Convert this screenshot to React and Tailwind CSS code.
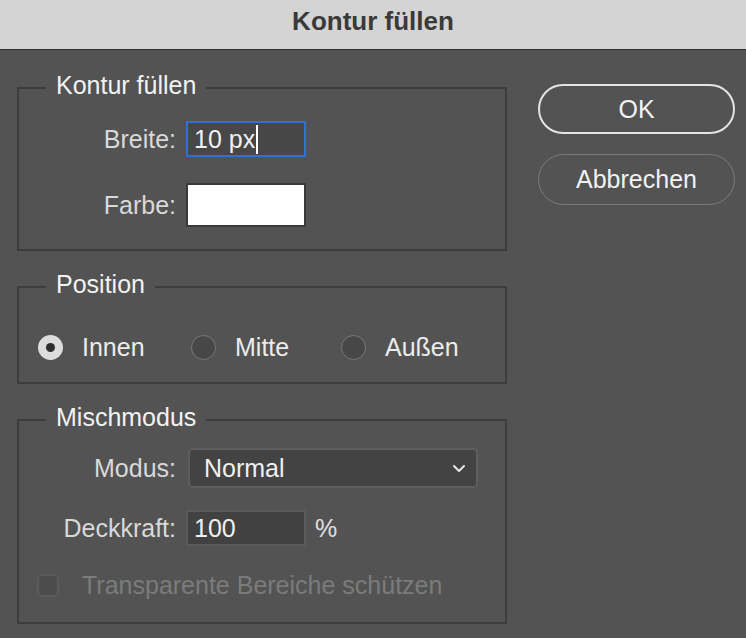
export default function App() {
  return (
    <div className="w-[746px] h-[638px] bg-[#535353] flex flex-col overflow-hidden font-['Liberation_Sans',Arial,sans-serif]">
      <div className="h-[50px] shrink-0 bg-[#d3d4d3] border-b border-[#2e2e2e] flex justify-center pt-[6px]">
        <span className="text-[26px] leading-[30px] font-bold text-[#3a3a3a]">Kontur füllen</span>
      </div>
      <div className="flex pl-[17px] pt-[21px]">
        <div className="w-[490px] shrink-0 flex flex-col">
          <fieldset className="border-2 border-[#3d3d3d] pt-[17px] pb-[22px]">
            <legend className="ml-[27px] px-[10px] pb-[4px] text-[25px] leading-[29px] text-[#f2f2f2]">Kontur füllen</legend>
            <div className="grid grid-cols-[157px_auto] gap-x-[10px] gap-y-[26px] items-center">
              <span className="text-right text-[25px] leading-[29px] text-[#d9d9d9]">Breite:</span>
              <div className="w-[120px] h-[36px] border-2 border-[#2f6fd6] bg-[#474747] flex items-center pl-[6px]">
                <span className="text-[25px] leading-[29px] text-[#f0f0f0]">10 px</span>
                <span className="w-[2px] h-[29px] bg-white ml-[1px]"></span>
              </div>
              <span className="text-right text-[25px] leading-[29px] text-[#d9d9d9]">Farbe:</span>
              <div className="w-[120px] h-[44px] border-2 border-[#3a3a3a] bg-white"></div>
            </div>
          </fieldset>

          <fieldset className="mt-[19px] border-2 border-[#3d3d3d] pt-[30px] pb-[20px]">
            <legend className="ml-[27px] px-[10px] pb-[4px] text-[25px] leading-[29px] text-[#f2f2f2]">Position</legend>
            <div className="flex items-center h-[29px] pl-[19px]">
              <div className="w-[153px] flex items-center gap-[19px]">
                <span className="w-[25px] h-[25px] rounded-full bg-[#dcdcdc] flex items-center justify-center">
                  <span className="w-[9px] h-[9px] rounded-full bg-[#2e2e2e]"></span>
                </span>
                <span className="text-[25px] leading-[29px] text-[#ececec]">Innen</span>
              </div>
              <div className="w-[150px] flex items-center gap-[19px]">
                <span className="w-[25px] h-[25px] rounded-full bg-[#474747] border-[1.5px] border-[#787878]"></span>
                <span className="text-[25px] leading-[29px] text-[#ececec]">Mitte</span>
              </div>
              <div className="flex items-center gap-[19px]">
                <span className="w-[25px] h-[25px] rounded-full bg-[#474747] border-[1.5px] border-[#787878]"></span>
                <span className="text-[25px] leading-[29px] text-[#ececec]">Außen</span>
              </div>
            </div>
          </fieldset>

          <fieldset className="mt-[19px] border-2 border-[#3d3d3d] pt-[12px] pb-[22px]">
            <legend className="ml-[27px] px-[10px] pb-[4px] text-[25px] leading-[29px] text-[#f2f2f2]">Mischmodus</legend>
            <div className="flex items-center">
              <span className="w-[157px] text-right text-[25px] leading-[29px] text-[#d9d9d9]">Modus:</span>
              <div className="ml-[12px] w-[290px] h-[40px] rounded-[5px] border-2 border-[#5e5e5e] bg-[#434343] flex items-center justify-between pl-[14px] pr-[10px]">
                <span className="text-[25px] leading-[29px] text-[#f0f0f0]">Normal</span>
                <svg width="14" height="10" viewBox="0 0 14 10" fill="none">
                  <polyline points="2,3 7,8 12,3" stroke="#e6e6e6" strokeWidth="2" strokeLinecap="round" strokeLinejoin="round" />
                </svg>
              </div>
            </div>
            <div className="flex items-center mt-[22px]">
              <span className="w-[157px] text-right text-[25px] leading-[29px] text-[#d9d9d9]">Deckkraft:</span>
              <div className="ml-[10px] w-[120px] h-[36px] border-2 border-[#5b5b5b] bg-[#414141] flex items-center pl-[6px]">
                <span className="text-[25px] leading-[29px] text-[#f0f0f0]">100</span>
              </div>
              <span className="ml-[9px] text-[25px] leading-[29px] text-[#e0e0e0]">%</span>
            </div>
            <div className="flex items-center h-[29px] mt-[25px] pl-[18px] gap-[23px]">
              <span className="w-[22px] h-[23px] rounded-[5px] border-2 border-[#5b5b5b] bg-[#4c4c4c]"></span>
              <span className="text-[25px] leading-[29px] text-[#7b7b7b]">Transparente Bereiche schützen</span>
            </div>
          </fieldset>
        </div>

        <div className="ml-[31px] w-[197px] shrink-0 pt-[13px] flex flex-col gap-[20px]">
          <button className="h-[50px] rounded-full border-2 border-[#e4e4e4] text-[25px] leading-[29px] text-[#f2f2f2]">OK</button>
          <button className="h-[51px] rounded-full border-[1.5px] border-[#7c7c7c] text-[25px] leading-[29px] text-[#f2f2f2]">Abbrechen</button>
        </div>
      </div>
    </div>
  );
}
